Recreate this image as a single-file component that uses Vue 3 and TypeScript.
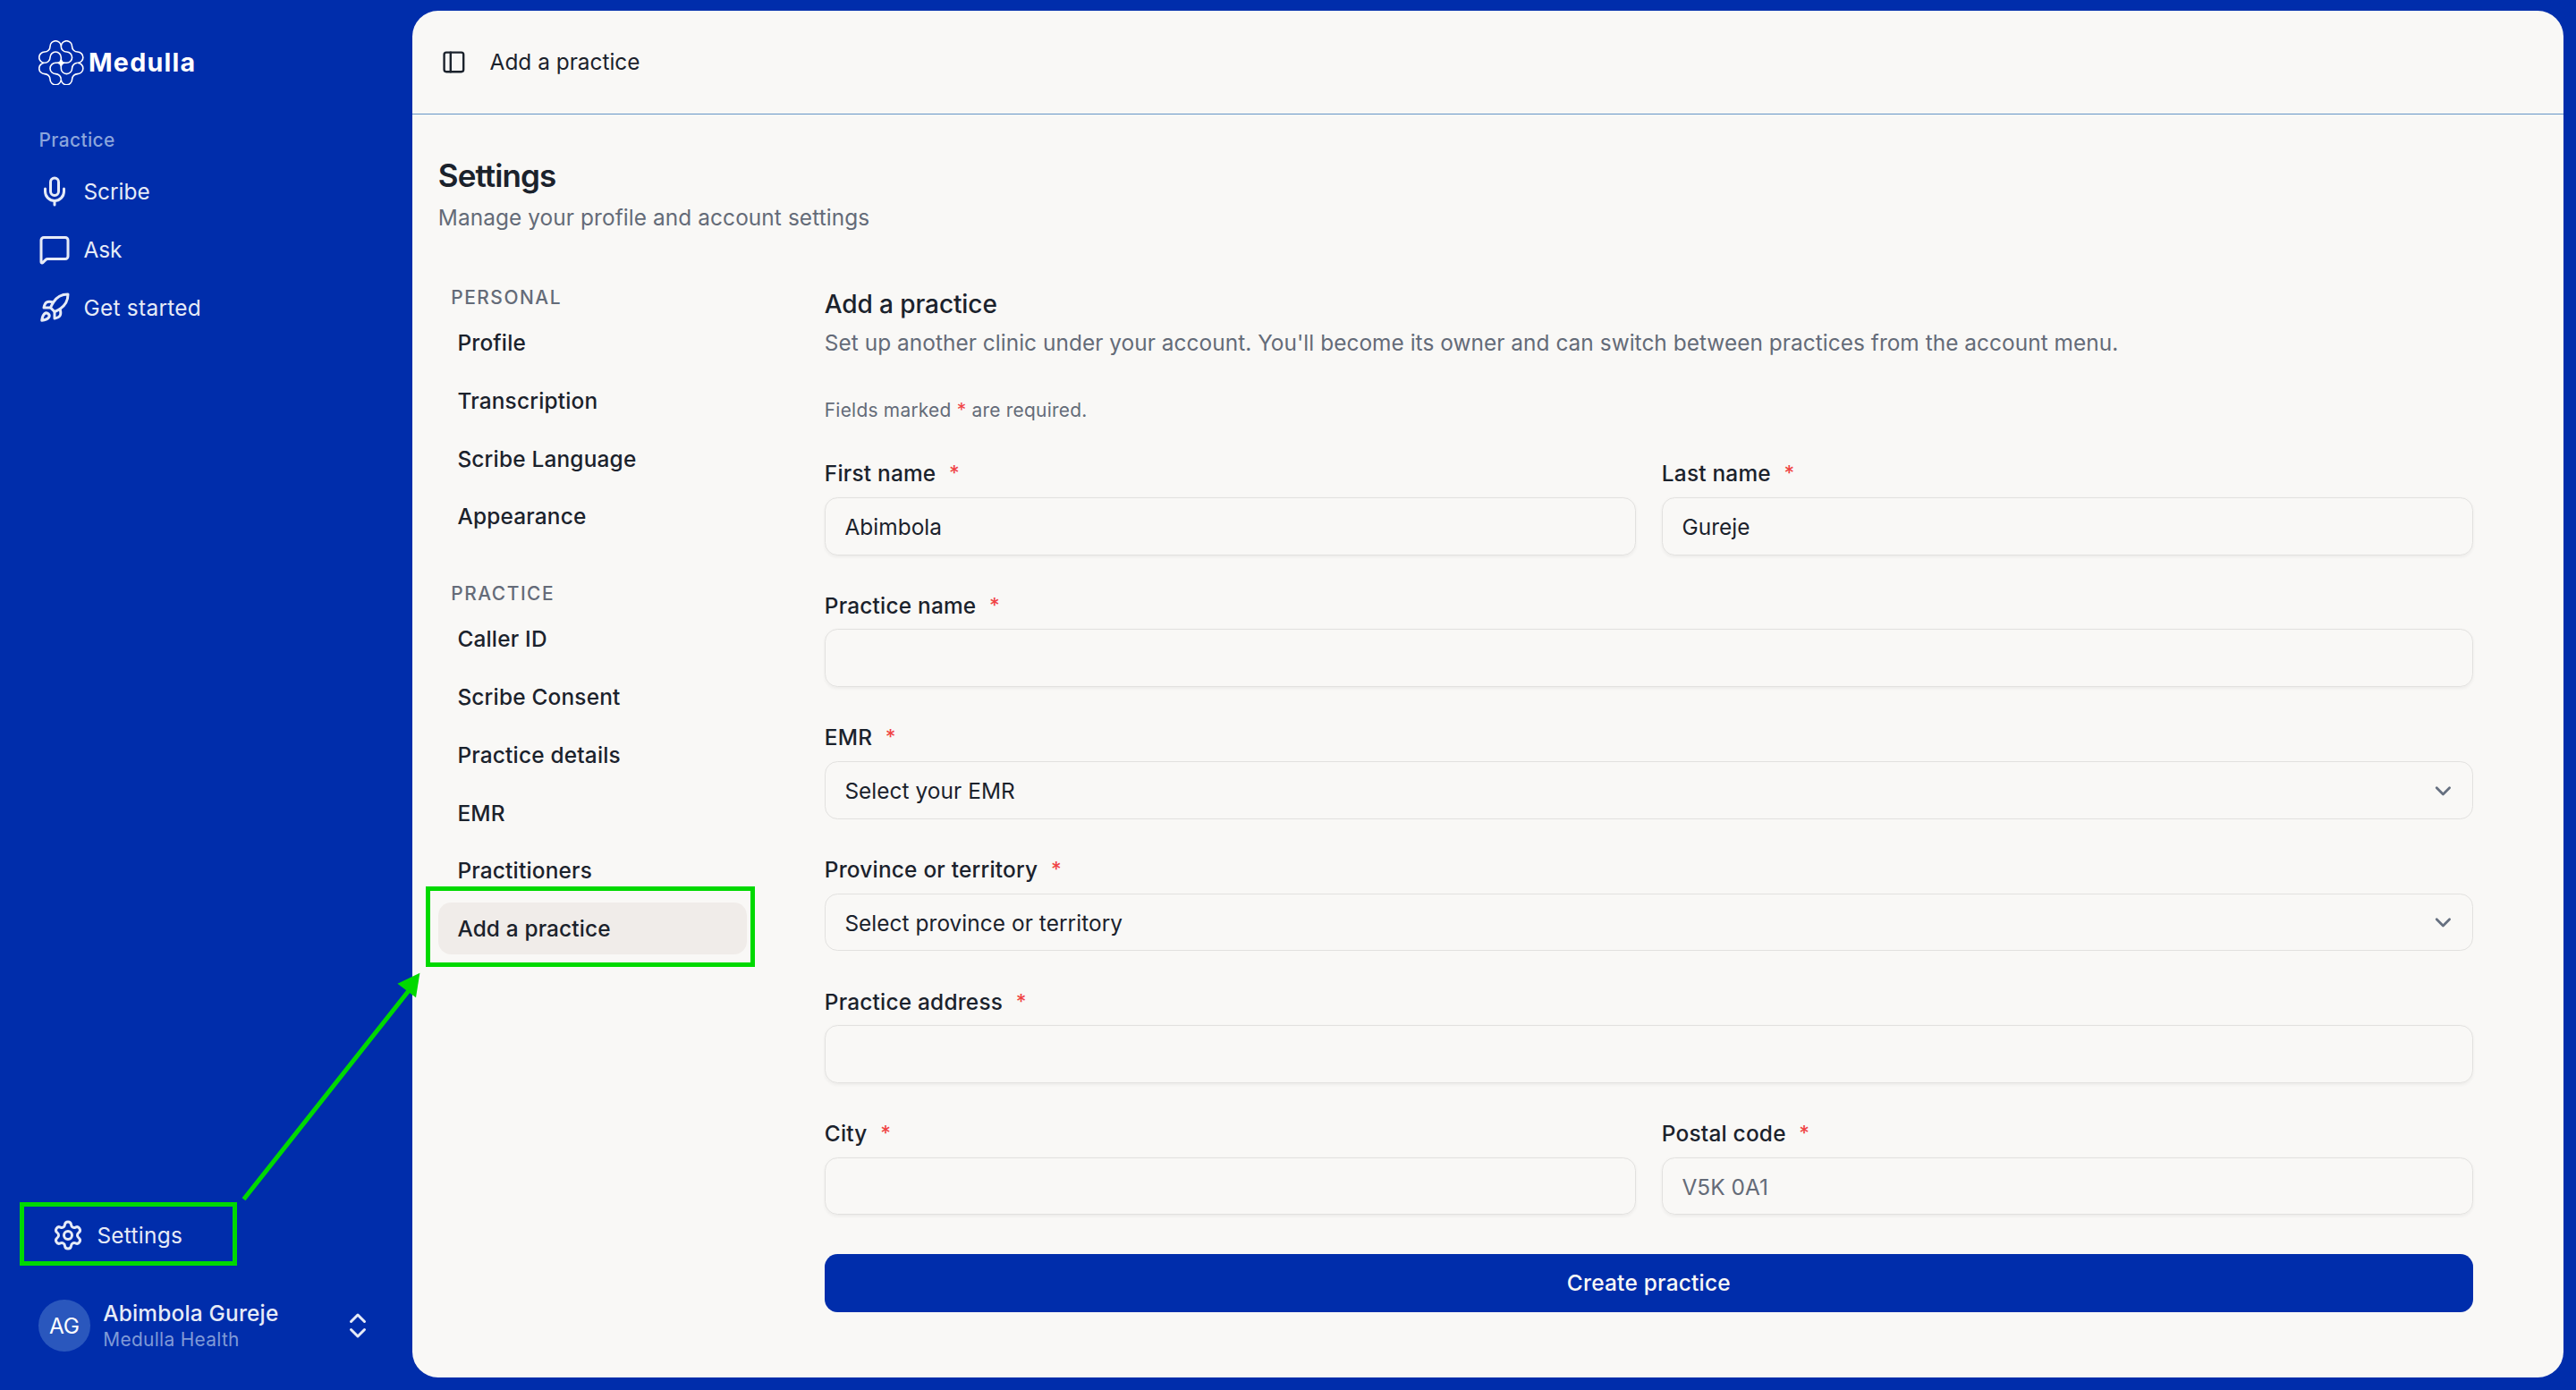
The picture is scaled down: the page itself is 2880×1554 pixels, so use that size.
<script setup lang="ts">
interface NavItem {
  label: string
  icon: 'mic' | 'chat' | 'rocket'
}

interface NavGroup {
  title: string
  items: string[]
}

interface Field {
  label: string
  value?: string
  placeholder?: string
  select?: boolean
}

const mainNav: NavItem[] = [
  { label: 'Scribe', icon: 'mic' },
  { label: 'Ask', icon: 'chat' },
  { label: 'Get started', icon: 'rocket' },
]

const groups: NavGroup[] = [
  { title: 'PERSONAL', items: ['Profile', 'Transcription', 'Scribe Language', 'Appearance'] },
  {
    title: 'PRACTICE',
    items: ['Caller ID', 'Scribe Consent', 'Practice details', 'EMR', 'Practitioners', 'Add a practice'],
  },
]

const activeItem = 'Add a practice'

const rows: Field[][] = [
  [
    { label: 'First name', value: 'Abimbola' },
    { label: 'Last name', value: 'Gureje' },
  ],
  [{ label: 'Practice name' }],
  [{ label: 'EMR', value: 'Select your EMR', select: true }],
  [{ label: 'Province or territory', value: 'Select province or territory', select: true }],
  [{ label: 'Practice address' }],
  [{ label: 'City' }, { label: 'Postal code', placeholder: 'V5K 0A1' }],
]
</script>

<template>
  <div class="app">
    <aside class="sidebar">
      <div class="brand">
        <svg class="brand-mark" viewBox="-4.12 -4.12 8.24 8.24" fill="none" stroke="#fff" stroke-width="0.26">
          <path
            d="M0-3A1 1 0 0 1 2-3A1 1 0 0 0 3-2A1 1 0 0 1 3 0A1 1 0 0 1 3 2A1 1 0 0 0 2 3A1 1 0 0 1 0 3A1 1 0 0 1-2 3A1 1 0 0 0-3 2A1 1 0 0 1-3 0A1 1 0 0 1-3-2A1 1 0 0 0-2-3A1 1 0 0 1 0-3Z"
          />
          <path
            v-for="turn in 4"
            :key="turn"
            d="M0 0V-1A1 1 0 0 0-2-1A1 1 0 0 1-3 0"
            :transform="`rotate(${turn * 90})`"
          />
          <path
            d="M0-.8Q.2-.2 .8 0Q.2 .2 0 .8Q-.2 .2-.8 0Q-.2-.2 0-.8Z"
            fill="#fff"
            stroke="none"
          />
        </svg>
        <span class="brand-name">Medulla</span>
      </div>

      <div class="side-label">Practice</div>
      <nav class="side-nav">
        <a v-for="item in mainNav" :key="item.label" class="side-item">
          <svg class="icon" viewBox="0 0 24 24">
            <template v-if="item.icon === 'mic'">
              <path d="M12 19v3" />
              <path d="M19 10v2a7 7 0 0 1-14 0v-2" />
              <rect x="9" y="2" width="6" height="13" rx="3" />
            </template>
            <path
              v-else-if="item.icon === 'chat'"
              d="M22 17a2 2 0 0 1-2 2H6.828a2 2 0 0 0-1.414.586l-2.202 2.202A.71.71 0 0 1 2 21.286V5a2 2 0 0 1 2-2h16a2 2 0 0 1 2 2z"
            />
            <template v-else>
              <path
                d="M4.5 16.5c-1.5 1.26-2 5-2 5s3.74-.5 5-2c.71-.84.7-2.13-.09-2.91a2.18 2.18 0 0 0-2.91-.09z"
              />
              <path d="m12 15-3-3a22 22 0 0 1 2-3.95A12.88 12.88 0 0 1 22 2c0 2.72-.78 7.5-6 11a22.35 22.35 0 0 1-4 2z" />
              <path d="M9 12H4s.55-3.03 2-4c1.62-1.08 5 0 5 0" />
              <path d="M12 15v5s3.03-.55 4-2c1.08-1.62 0-5 0-5" />
            </template>
          </svg>
          <span>{{ item.label }}</span>
        </a>
      </nav>

      <div class="side-foot">
        <a class="side-item settings-link">
          <svg class="icon" viewBox="0 0 24 24">
            <path
              d="M9.671 4.136a2.34 2.34 0 0 1 4.659 0 2.34 2.34 0 0 0 3.319 1.915 2.34 2.34 0 0 1 2.33 4.033 2.34 2.34 0 0 0 0 3.831 2.34 2.34 0 0 1-2.33 4.033 2.34 2.34 0 0 0-3.319 1.915 2.34 2.34 0 0 1-4.659 0 2.34 2.34 0 0 0-3.32-1.915 2.34 2.34 0 0 1-2.33-4.033 2.34 2.34 0 0 0 0-3.831A2.34 2.34 0 0 1 6.35 6.051a2.34 2.34 0 0 0 3.319-1.915"
            />
            <circle cx="12" cy="12" r="3" />
          </svg>
          <span>Settings</span>
        </a>
        <div class="user">
          <div class="avatar">AG</div>
          <div class="user-text">
            <div class="user-name">Abimbola Gureje</div>
            <div class="user-org">Medulla Health</div>
          </div>
          <svg class="icon" viewBox="0 0 24 24">
            <path d="m7 15 5 5 5-5" />
            <path d="m7 9 5-5 5 5" />
          </svg>
        </div>
      </div>
    </aside>

    <main class="panel">
      <header class="topbar">
        <svg class="icon-sm" viewBox="0 0 24 24">
          <rect x="3" y="3" width="18" height="18" rx="2" />
          <path d="M9 3v18" />
        </svg>
        <span>Add a practice</span>
      </header>

      <div class="content">
        <h1>Settings</h1>
        <p class="lead">Manage your profile and account settings</p>

        <div class="columns">
          <nav class="settings-nav">
            <section v-for="group in groups" :key="group.title" class="group">
              <div class="group-title">{{ group.title }}</div>
              <a
                v-for="item in group.items"
                :key="item"
                class="group-item"
                :class="{ active: item === activeItem }"
                >{{ item }}</a
              >
            </section>
          </nav>

          <section class="form">
            <h2>Add a practice</h2>
            <p class="form-desc">
              Set up another clinic under your account. You'll become its owner and can switch between practices from
              the account menu.
            </p>
            <p class="note">Fields marked <span class="req">*</span> are required.</p>

            <div class="rows">
              <div v-for="(row, i) in rows" :key="i" class="row">
                <div v-for="field in row" :key="field.label" class="field">
                  <div class="label">
                    <span>{{ field.label }}</span>
                    <span class="star">*</span>
                  </div>
                  <div class="control" :class="{ select: field.select }">
                    <span v-if="field.value">{{ field.value }}</span>
                    <span v-else-if="field.placeholder" class="placeholder">{{ field.placeholder }}</span>
                    <svg v-if="field.select" class="icon-sm chevron" viewBox="0 0 24 24">
                      <path d="m6 9 6 6 6-6" />
                    </svg>
                  </div>
                </div>
              </div>
            </div>

            <div class="submit">Create practice</div>
          </section>
        </div>
      </div>
    </main>

    <!-- walkthrough annotations drawn over the page -->
    <div class="mark mark-settings"></div>
    <div class="mark mark-practice"></div>
    <svg class="arrow" viewBox="0 0 210 262">
      <path d="M8.5 259.8 195 24" stroke="#00d900" stroke-width="5" fill="none" />
      <path d="M205.4 6.8 180.4 18.8 201 34.2Z" fill="#00d900" />
    </svg>
  </div>
</template>

<style>
body {
  margin: 0;
  background: #002dab;
}
</style>

<style scoped>
.app {
  position: relative;
  box-sizing: border-box;
  display: flex;
  width: 2880px;
  height: 1554px;
  padding: 12px 14px 14px 0;
  overflow: hidden;
  background: #002dab;
  font-family: Inter, 'Liberation Sans', sans-serif;
  font-size: 24.4px;
  line-height: 30px;
  letter-spacing: 0.06px;
  color: #1b222c;
}

h1,
h2,
p {
  margin: 0;
}

.icon,
.icon-sm {
  flex: none;
  width: 36px;
  height: 36px;
  fill: none;
  stroke: currentColor;
  stroke-width: 2;
  stroke-linecap: round;
  stroke-linejoin: round;
}

.icon-sm {
  width: 28.8px;
  height: 28.8px;
}

.sidebar {
  box-sizing: border-box;
  display: flex;
  flex-direction: column;
  flex: none;
  width: 461px;
  padding: 32px 43px 21px;
  color: #e6ebf7;
}

.brand {
  display: flex;
  align-items: center;
  height: 52px;
}

.brand-mark {
  flex: none;
  width: 50.6px;
  height: 50.6px;
}

.brand-name {
  margin-left: 5.4px;
  font-size: 28.6px;
  font-weight: 700;
  line-height: 36px;
  letter-spacing: 1.25px;
  color: #fff;
}

.side-label {
  margin-top: 46px;
  padding-left: 0.5px;
  font-size: 20.9px;
  font-weight: 500;
  line-height: 29px;
  letter-spacing: 0.4px;
  color: #8ba5dc;
}

.side-nav {
  display: flex;
  flex-direction: column;
  gap: 7.2px;
  margin-top: 14.2px;
}

.side-item {
  display: flex;
  align-items: center;
  gap: 14.4px;
  height: 57.6px;
  letter-spacing: 0;
}

.side-item:last-child {
  letter-spacing: 0.3px;
}

.side-foot {
  display: flex;
  flex-direction: column;
  margin-top: auto;
}

.settings-link {
  padding-left: 15px;
  margin-bottom: 35px;
  letter-spacing: 0.3px;
}

.user {
  display: flex;
  align-items: center;
  height: 74px;
}

.avatar {
  flex: none;
  width: 57.6px;
  height: 57.6px;
  border-radius: 50%;
  background: #2a57bd;
  color: #fff;
  line-height: 58px;
  text-align: center;
  letter-spacing: -0.4px;
}

.user-text {
  flex: 1;
  margin-left: 14.6px;
  padding-top: 1px;
}

.user-name {
  font-weight: 500;
  letter-spacing: 0.21px;
  line-height: 30px;
}

.user-org {
  font-size: 20.9px;
  letter-spacing: 0.32px;
  line-height: 29px;
  color: #7f9ad7;
}

.panel {
  flex: 1;
  border-radius: 28.8px;
  background: #f9f8f6;
  overflow: hidden;
}

.topbar {
  display: flex;
  align-items: center;
  gap: 25.8px;
  height: 114.4px;
  padding: 0 32px 0.6px;
  border-bottom: 1px solid #6695c6;
  letter-spacing: 0;
}

.content {
  padding: 50px 101px 0 28.8px;
}

h1 {
  font-size: 35px;
  font-weight: 600;
  line-height: 36px;
  letter-spacing: -0.92px;
}

.lead {
  margin-top: 14px;
  color: #646b78;
  letter-spacing: 0.09px;
}

.columns {
  display: flex;
  margin-top: 60px;
}

.settings-nav {
  flex: none;
  width: 345.6px;
  margin-right: 86.4px;
}

.group + .group {
  margin-top: 43.3px;
}

.group-title {
  margin-bottom: 7px;
  padding-left: 14.4px;
  font-size: 20.9px;
  font-weight: 500;
  line-height: 29px;
  letter-spacing: 1.55px;
  color: #646b78;
}

.group-item {
  display: block;
  height: 57.6px;
  margin-bottom: 7.2px;
  padding-left: 21.6px;
  border-radius: 14.4px;
  font-weight: 500;
  line-height: 58px;
  letter-spacing: 0.2px;
}

.group-item:last-child {
  margin-bottom: 0;
}

.group-item.active {
  background: #f0ece9;
  letter-spacing: 0.15px;
}

.form {
  flex: 1;
  padding-top: 4px;
}

h2 {
  font-size: 28px;
  font-weight: 500;
  line-height: 36px;
  letter-spacing: -0.1px;
}

.form-desc {
  margin-top: 10px;
  color: #646b78;
  letter-spacing: 0.046px;
}

.note {
  margin-top: 46px;
  font-size: 20.9px;
  line-height: 29px;
  letter-spacing: 0.25px;
  color: #646b78;
}

.req {
  color: #f04444;
}

.rows {
  display: flex;
  flex-direction: column;
  gap: 43.2px;
  margin-top: 43.32px;
}

.row {
  display: flex;
  gap: 28.8px;
}

.field {
  flex: 1;
}

.label {
  display: flex;
  gap: 14.6px;
  height: 27.2px;
  margin-top: -2px;
  font-weight: 500;
  letter-spacing: 0.22px;
}

.star {
  font-size: 22.5px;
  color: #f04444;
}

.control {
  box-sizing: border-box;
  display: flex;
  align-items: center;
  justify-content: space-between;
  height: 64.8px;
  margin-top: 14.4px;
  padding: 1.6px 18.4px 0 21.6px;
  border: 1px solid #e2e1df;
  border-radius: 14.4px;
  box-shadow: 0 1.8px 3.6px rgba(0, 0, 0, 0.05);
}

.control.select {
  box-shadow: none;
}

.placeholder {
  color: #646b78;
}

.chevron {
  color: #667080;
  stroke-width: 2.3;
}

.submit {
  height: 65px;
  margin-top: 43.2px;
  border-radius: 14.4px;
  background: #002dab;
  color: #f9f8f6;
  font-weight: 500;
  line-height: 64px;
  letter-spacing: 0.25px;
  text-align: center;
}

.mark {
  position: absolute;
  box-sizing: border-box;
  border: 5px solid #00d900;
}

.mark-settings {
  left: 22px;
  top: 1344px;
  width: 243px;
  height: 71px;
}

.mark-practice {
  left: 476px;
  top: 991px;
  width: 368px;
  height: 90px;
}

.arrow {
  position: absolute;
  left: 264px;
  top: 1080.5px;
  width: 210px;
  height: 262px;
}
</style>
